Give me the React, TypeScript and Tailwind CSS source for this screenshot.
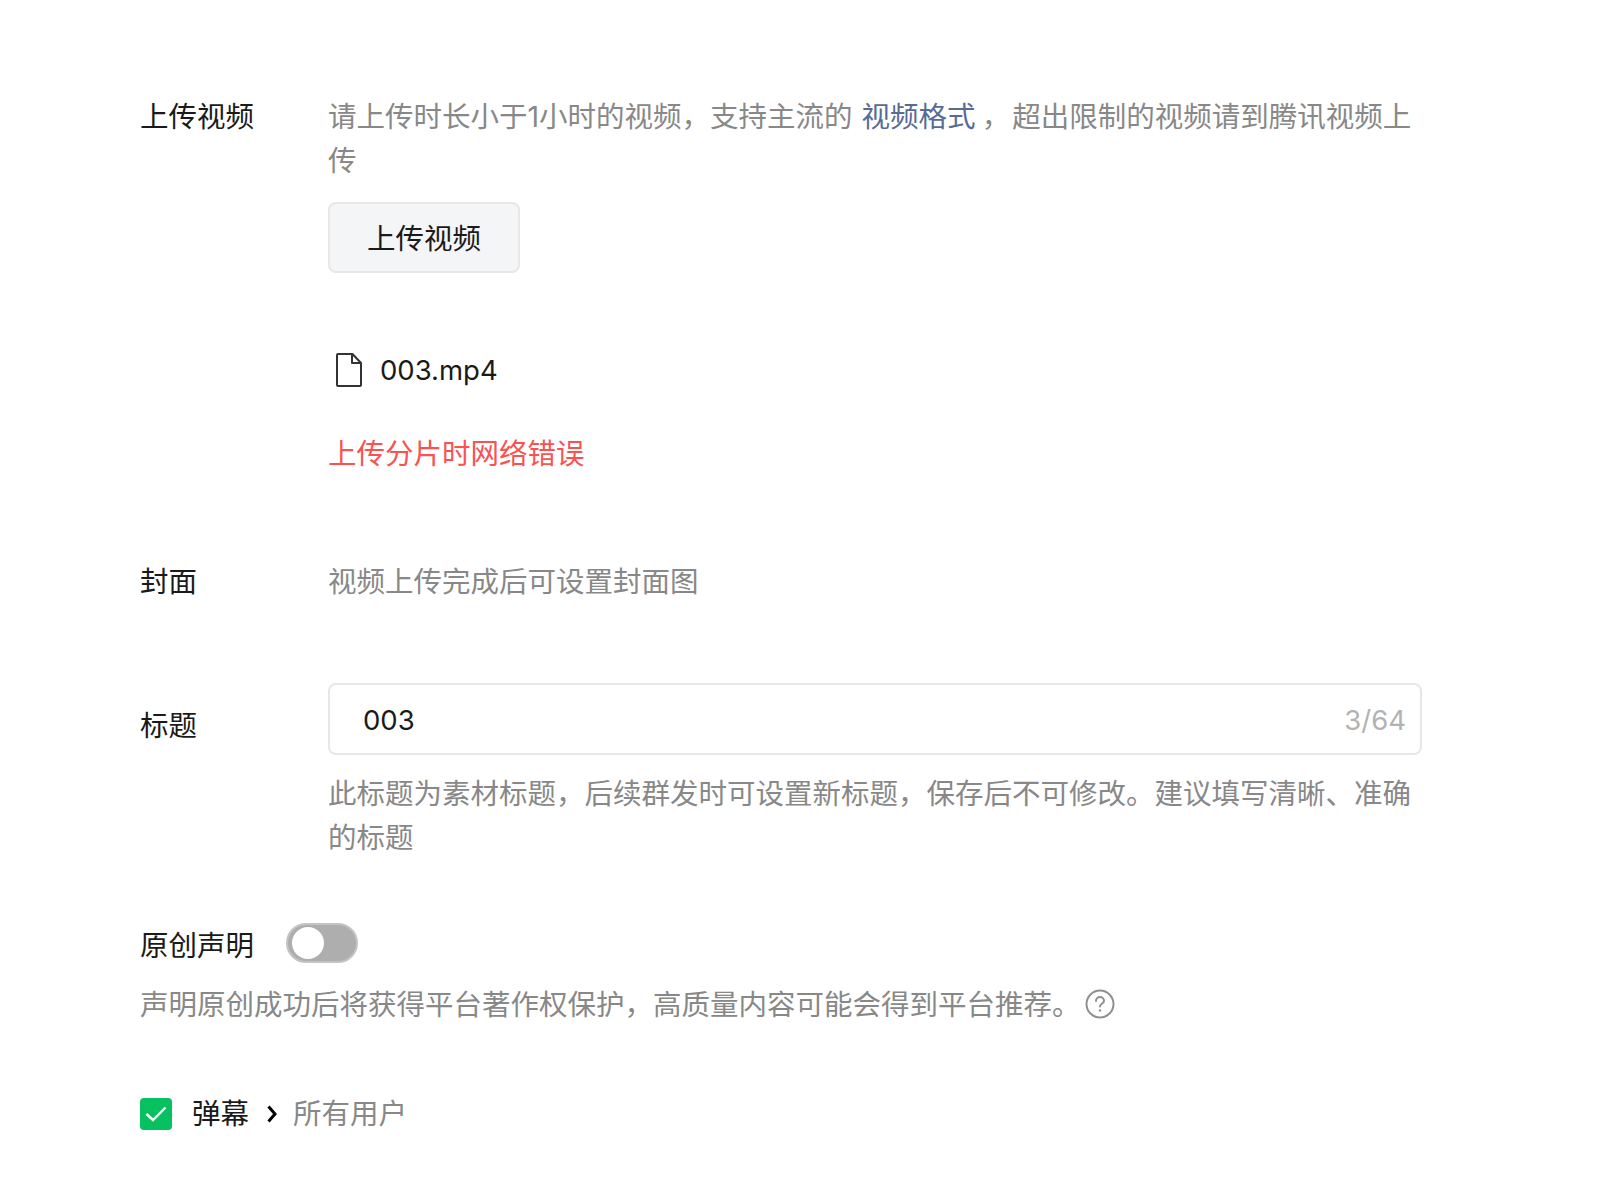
const fontStack = "font-['Inter','Noto_Sans_CJK_SC',sans-serif]"

function Label({ children }: { children: string }) {
  return <div className="w-[188px] shrink-0 text-[#1a1a1a]">{children}</div>
}

function FileIcon() {
  return (
    <svg width="26" height="34" viewBox="0 0 26 34" fill="none" stroke="#333" strokeWidth="2">
      <path d="M2 1h14.5L25 10v22a1 1 0 0 1-1 1H2a1 1 0 0 1-1-1V2a1 1 0 0 1 1-1z" strokeLinejoin="round" />
      <path d="M16 1v9h9" strokeLinejoin="round" />
    </svg>
  )
}

function HelpIcon() {
  return (
    <svg width="30" height="30" viewBox="0 0 30 30" fill="none" stroke="#8f8f8f" strokeWidth="2">
      <circle cx="15" cy="15" r="13.5" />
      <path d="M11 12a4 4 0 0 1 8 0c0 2.4-4 2.6-4 5.6" strokeLinecap="round" />
      <circle cx="15" cy="21.5" r="1.2" fill="#8f8f8f" stroke="none" />
    </svg>
  )
}

export default function App() {
  return (
    <main className={`min-h-[1188px] bg-white pt-[95px] pl-[140px] text-[28.5px] leading-[44px] ${fontStack}`}>
      <div className="flex">
        <Label>上传视频</Label>
        <div className="w-[1094px]">
          <p className="text-[#888888]">
            请上传时长小于1小时的视频，支持主流的{' '}
            <a className="ml-px text-[#576b95]">视频格式</a>
            <span className="mr-[2px] ml-[6px]">，</span>超出限制的视频请到腾讯视频上传
          </p>
          <button className="mt-[19px] block h-[71px] w-[192px] rounded-lg border-2 border-[#e7e7e7] bg-[#f4f5f7] pt-[2px] text-[#1a1a1a]">
            上传视频
          </button>
          <div className="mt-[75px] flex items-center pl-2">
            <FileIcon />
            <span className="ml-[18px] text-[27.5px] text-[#1a1a1a]">003.mp4</span>
          </div>
          <p className="mt-[40px] text-[#fa5151]">上传分片时网络错误</p>
        </div>
      </div>

      <div className="mt-[84px] flex">
        <Label>封面</Label>
        <p className="text-[#888888]">视频上传完成后可设置封面图</p>
      </div>

      <div className="mt-[79px] flex">
        <div className="pt-[21px]">
          <Label>标题</Label>
        </div>
        <div className="w-[1094px]">
          <div className="flex h-[72px] items-center justify-between rounded-lg border-2 border-[#e7e7e7] pt-[1px] pr-[14px] pl-[33px]">
            <span className="text-[27.5px] text-[#1a1a1a]">003</span>
            <span className="text-[27.5px] text-[#b2b2b2]">3/64</span>
          </div>
          <p className="mt-[17px] text-[#888888]">
            此标题为素材标题，后续群发时可设置新标题，保存后不可修改。建议填写清晰、准确的标题
          </p>
        </div>
      </div>

      <div className="mt-[63px] flex items-center">
        <span className="text-[#1a1a1a]">原创声明</span>
        <div className="mb-[6px] ml-[32px] flex h-10 w-[72px] items-center rounded-full border-2 border-[#c4c4c4] bg-[#aeaeae] pl-1">
          <div className="h-8 w-8 rounded-full bg-white" />
        </div>
      </div>
      <div className="mt-[14px] flex items-center text-[#888888]">
        <span>声明原创成功后将获得平台著作权保护，高质量内容可能会得到平台推荐。</span>
        <div className="mb-[2px] ml-1 flex">
          <HelpIcon />
        </div>
      </div>

      <div className="mt-[65px] flex items-center">
        <div className="flex h-8 w-8 items-center justify-center rounded bg-[#07c160]">
          <svg width="22" height="16" viewBox="0 0 22 16" fill="none" stroke="white" strokeWidth="2.4">
            <path d="M1.5 8l6.5 6L20.5 1.5" />
          </svg>
        </div>
        <span className="ml-[20px] text-[#1a1a1a]">弹幕</span>
        <svg className="mr-[16px] ml-[18px]" width="10" height="18" viewBox="0 0 10 18" fill="none" stroke="black" strokeWidth="3">
          <path d="M1.5 1.5L8 9l-6.5 7.5" />
        </svg>
        <span className="text-[#888888]">所有用户</span>
      </div>
    </main>
  )
}
